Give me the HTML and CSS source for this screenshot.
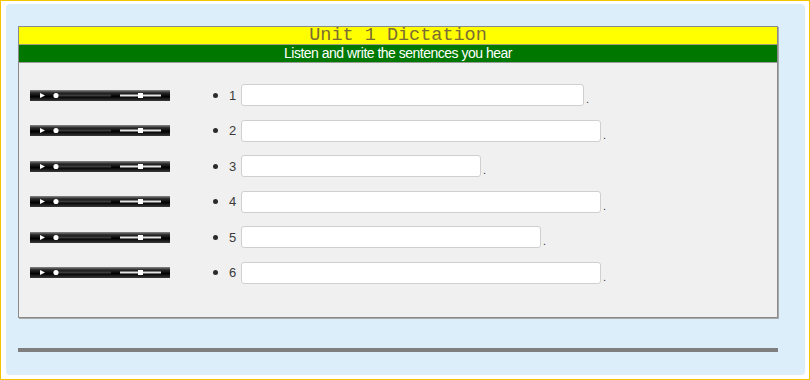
FILE: index.html
```html
<!DOCTYPE html>
<html lang="en">
<head>
    <meta charset="UTF-8">
    <title>Unit 1 Dictation</title>
    <link rel="stylesheet" href="styles.css">
</head>
<body>

    <div class="frame">
        <div class="panel">
            <div class="exercise">
                <div class="title">Unit 1 Dictation</div>
                <div class="subtitle">Listen and write the sentences you hear</div>

                <div class="rows">
                    <div class="row">
                        <svg class="player" viewBox="0 0 140 11"><use href="#player"/></svg>
                        <span class="bullet"></span>
                        <span class="num">1</span>
                        <input type="text" class="answer" style="width: 343px;">
                        <span class="stop">.</span>
                    </div>
                    <div class="row">
                        <svg class="player" viewBox="0 0 140 11"><use href="#player"/></svg>
                        <span class="bullet"></span>
                        <span class="num">2</span>
                        <input type="text" class="answer" style="width: 360px;">
                        <span class="stop">.</span>
                    </div>
                    <div class="row">
                        <svg class="player" viewBox="0 0 140 11"><use href="#player"/></svg>
                        <span class="bullet"></span>
                        <span class="num">3</span>
                        <input type="text" class="answer" style="width: 240px;">
                        <span class="stop">.</span>
                    </div>
                    <div class="row">
                        <svg class="player" viewBox="0 0 140 11"><use href="#player"/></svg>
                        <span class="bullet"></span>
                        <span class="num">4</span>
                        <input type="text" class="answer" style="width: 360px;">
                        <span class="stop">.</span>
                    </div>
                    <div class="row">
                        <svg class="player" viewBox="0 0 140 11"><use href="#player"/></svg>
                        <span class="bullet"></span>
                        <span class="num">5</span>
                        <input type="text" class="answer" style="width: 300px;">
                        <span class="stop">.</span>
                    </div>
                    <div class="row">
                        <svg class="player" viewBox="0 0 140 11"><use href="#player"/></svg>
                        <span class="bullet"></span>
                        <span class="num">6</span>
                        <input type="text" class="answer" style="width: 360px;">
                        <span class="stop">.</span>
                    </div>
                </div>
            </div>

            <div class="rule"></div>
        </div>
    </div>

    <!-- audio player graphic, reused on every row -->
    <svg width="0" height="0" class="defs">
        <defs>
            <linearGradient id="bar" x1="0" y1="0" x2="0" y2="1">
                <stop offset="0" stop-color="#8a8a8a"/>
                <stop offset="0.25" stop-color="#2a2a2a"/>
                <stop offset="0.6" stop-color="#000"/>
                <stop offset="1" stop-color="#3a3a3a"/>
            </linearGradient>
            <g id="player">
                <rect x="0" y="0" width="140" height="11" fill="url(#bar)"/>
                <path d="M10 3 L15 5.5 L10 8 Z" fill="#fff"/>
                <circle cx="26" cy="5.5" r="2.6" fill="#fff"/>
                <rect x="29" y="4.5" width="52" height="2" fill="#3c3c3c"/>
                <rect x="90" y="4.5" width="41" height="2" fill="#e6e6e6"/>
                <rect x="108" y="3" width="5" height="5" fill="#fff"/>
            </g>
        </defs>
    </svg>

</body>
</html>
```

FILE: styles.css
```css
html, body {
    margin: 0;
    padding: 0;
}
body {
    width: 810px;
    height: 380px;
    background-color: #fff;
    font-family: "Liberation Sans", Arial, sans-serif;
}
.frame {
    box-sizing: border-box;
    width: 810px;
    height: 380px;
    border: 1px solid #f5c400;
    padding: 3px 4px 4px 5px;
}
.panel {
    box-sizing: border-box;
    height: 100%;
    background-color: #dbeef9;
    border-radius: 4px;
    padding: 22px 27px 0 12px;
}
.exercise {
    border: 1px solid #8a8a8a;
    box-shadow: 1px 1px 0 #a9a9a9;
    background-color: #f0f0f0;
}
.title {
    height: 17px;
    background-color: #ffff00;
    border-bottom: 1px solid #a0a080;
    font-family: "Liberation Mono", "Courier New", monospace;
    font-size: 18.5px;
    line-height: 18px;
    color: #7a6c33;
    text-align: center;
}
.subtitle {
    height: 17px;
    background-color: #007800;
    border-bottom: 1px solid #9a9a9a;
    color: #fff;
    font-size: 14px;
    line-height: 17px;
    letter-spacing: -0.5px;
    text-align: center;
}
.rows {
    padding: 21px 0 33px 11px;
}
.row {
    display: flex;
    align-items: center;
    height: 22px;
    margin-bottom: 13.6px;
}
.row:last-child {
    margin-bottom: 0;
}
.player {
    width: 140px;
    height: 11px;
    flex: none;
}
.bullet {
    width: 5px;
    height: 5px;
    border-radius: 50%;
    background-color: #2b2b2b;
    margin-left: 43px;
    flex: none;
}
.num {
    width: 12px;
    margin-left: 11px;
    font-size: 13px;
    color: #3a3a3a;
    flex: none;
}
.answer {
    box-sizing: border-box;
    height: 22px;
    margin: 0;
    padding: 2px 4px;
    border: 1px solid #cfcfcf;
    border-radius: 3px;
    background-color: #fff;
    flex: none;
}
.stop {
    margin-left: 2px;
    margin-top: 8px;
    font-size: 11px;
    color: #333;
}
.rule {
    height: 4px;
    margin-top: 30px;
    background-color: #7f7f7f;
}
.defs {
    position: absolute;
}
```
